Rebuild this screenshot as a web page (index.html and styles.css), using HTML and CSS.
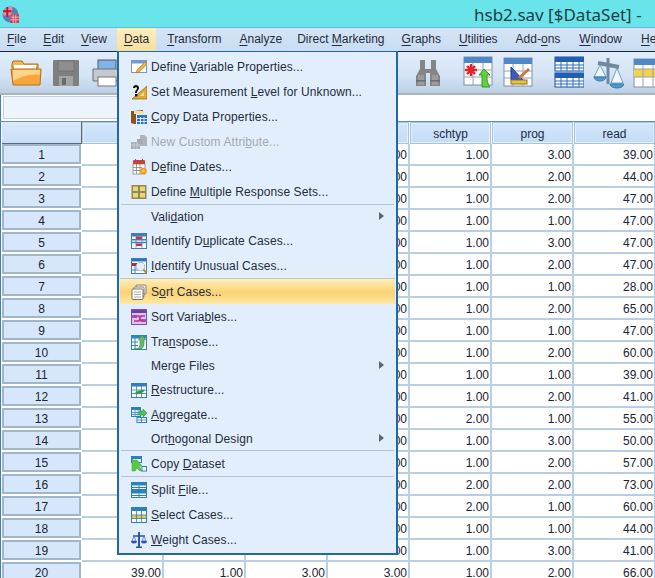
FILE: index.html
```html
<!DOCTYPE html>
<html lang="en">
<head>
<meta charset="utf-8">
<title>hsb2.sav [$DataSet]</title>
<link rel="stylesheet" href="styles.css">
</head>
<body>
<div class="window">
  <header class="titlebar">
    <svg class="app-icon" viewBox="0 0 16 16" width="17" height="17"><circle cx="8" cy="8" r="7.5" fill="#5b7fb5"/><path d="M1 6a7 7 0 0 1 9-5l-1 8H1z" fill="#d98fa8"/><rect x="8" y="8" width="8" height="8" fill="#d8344a"/><path d="M8 10.500h8M8 13h8M10.500 8v8M13 8v8" stroke="#f3c5cc" stroke-width=".8"/><path d="M5 1v9M1 5h8" stroke="#c8102e" stroke-width="1.800"/></svg>
    <span class="doc-title">hsb2.sav [$DataSet] -</span>
  </header>
  <nav class="menubar">
    <span class="mi"><u>F</u>ile</span>
    <span class="mi"><u>E</u>dit</span>
    <span class="mi"><u>V</u>iew</span>
    <span class="mi mi-open"><u>D</u>ata</span>
    <span class="mi mi-transform"><u>T</u>ransform</span>
    <span class="mi mi-analyze"><u>A</u>nalyze</span>
    <span class="mi mi-direct">Direct <u>M</u>arketing</span>
    <span class="mi"><u>G</u>raphs</span>
    <span class="mi mi-utilities"><u>U</u>tilities</span>
    <span class="mi mi-addons">Add-<u>o</u>ns</span>
    <span class="mi mi-window"><u>W</u>indow</span>
    <span class="mi mi-help"><u>H</u>elp</span>
  </nav>
  <div class="toolbar">
    <span class="grip"></span>
    <svg class="t-open" viewBox="0 0 32 28" width="32" height="28"><path d="M2 5l1-3h9l2 3h14v4H2z" fill="#f2b84a" stroke="#a8701c"/><rect x="4" y="6" width="22" height="5" fill="#fff"/><path d="M1 10h30l-1 16H3z" fill="#f8a63a" stroke="#b56f17"/><path d="M3 11h27l-.5 5C22 14 10 18 3 22z" fill="#fcd48a"/></svg>
    <svg class="t-save" viewBox="0 0 26 26" width="26" height="26"><rect width="26" height="26" rx="1" fill="#7f7f7f"/><rect x="5" y="1" width="16" height="10" fill="#8e8e8e" stroke="#737373"/><rect x="6" y="16" width="14" height="10" fill="#a3a3a3"/><rect x="9" y="18" width="4" height="7" fill="#6a6a6a"/></svg>
    <svg class="t-print" viewBox="0 0 30 28" width="30" height="28"><rect x="6" y="1" width="18" height="10" fill="#7fb4e8" stroke="#557"/><path d="M1 10h28v12H1z" fill="#c6c9cd" stroke="#6b6f75"/><rect x="6" y="18" width="18" height="9" fill="#fff" stroke="#777"/></svg>
    <svg class="t-bino" viewBox="0 0 24 27" width="24" height="27"><path d="M4 1h5v9h6V1h5v9l4 7v10H14V14h-4v13H0V17l4-7z" fill="#858585"/><path d="M2 16h6v10H2zM16 16h6v10h-6z" fill="#9c9c9c"/><rect x="0" y="21" width="10" height="1.500" fill="#6d6d6d"/><rect x="14" y="21" width="10" height="1.500" fill="#6d6d6d"/></svg>
    <svg class="t-case" viewBox="0 0 30 32" width="30" height="32"><rect x="1" y="1" width="28" height="28" fill="#fff" stroke="#8290a0"/><rect x="1" y="1" width="28" height="6" fill="#4f88c8"/><path d="M1 14h28M1 21h28M10 7v22M20 7v22" stroke="#9aa4ae"/><path d="M8 8v12M2 14h12M4 10l8 8M12 10l-8 8" stroke="#e8202a" stroke-width="2.400"/><path d="M19 31V19h-3l5-6 6 6h-3c0 5 0 8 3 12z" fill="#5fd13f" stroke="#2f9a2a"/></svg>
    <svg class="t-chart" viewBox="0 0 30 30" width="30" height="30"><rect x="1" y="1" width="28" height="28" fill="#fff" stroke="#8290a0"/><rect x="1" y="1" width="28" height="6" fill="#4f88c8"/><path d="M1 14h28M1 21h28M10 7v22M20 7v22" stroke="#9aa4ae"/><path d="M8 10v13h12z" fill="#3a5cc0" stroke="#1f3a90"/><rect x="8" y="23" width="16" height="4" fill="#e6c240" stroke="#92761a"/><path d="M15 20l10-9 2 2-10 9z" fill="#c9773a"/></svg>
    <svg class="t-tables" viewBox="0 0 30 32" width="30" height="32"><rect x="1" y="1" width="29" height="14" fill="#fff" stroke="#1d4f9c"/><rect x="1" y="1" width="29" height="5" fill="#1f5fb5"/><path d="M1 9h29M1 12h29M7 6v9M13 6v9M19 6v9M25 6v9" stroke="#2a6cc0"/><rect x="1" y="17" width="29" height="14" fill="#fff" stroke="#1d4f9c"/><rect x="1" y="17" width="29" height="5" fill="#1f5fb5"/><path d="M1 25h29M1 28h29M7 22v9M13 22v9M19 22v9M25 22v9" stroke="#2a6cc0"/></svg>
    <svg class="t-scale" viewBox="0 0 31 32" width="31" height="32"><path d="M15 1v26" stroke="#6e8aa0" stroke-width="3"/><path d="M5 6l21 4" stroke="#6e8aa0" stroke-width="4"/><path d="M7 8L1 20h12zM24 11l-6 15h12z" fill="#eef6fb" stroke="#6fa0c4"/><path d="M1 20a6 4 0 0 0 12 0zM17 27a7 4 0 0 0 14 0z" fill="#4f9ad0" stroke="#3a78a8"/></svg>
    <svg class="t-yellow" viewBox="0 0 30 30" width="30" height="30"><rect x="1" y="1" width="28" height="28" fill="#fff" stroke="#8290a0"/><rect x="1" y="1" width="28" height="6" fill="#4f88c8"/><rect x="1" y="11" width="28" height="8" fill="#f2d24a"/><path d="M1 11h28M1 19h28M10 7v22M20 7v22" stroke="#9aa4ae"/></svg>
  </div>
  <div class="cellbar">
    <div class="namebox"></div>
    <div class="valuebox"></div>
  </div>
  <div class="grid">
    <div class="corner"></div>
    <div class="ch"></div><div class="ch"></div><div class="ch"></div><div class="ch"></div>
    <div class="ch">schtyp</div><div class="ch">prog</div><div class="ch">read</div>

    <div class="rh">1</div><div class="c"></div><div class="c"></div><div class="c"></div><div class="c">1.00</div><div class="c">1.00</div><div class="c">3.00</div><div class="c">39.00</div>
    <div class="rh">2</div><div class="c"></div><div class="c"></div><div class="c"></div><div class="c">1.00</div><div class="c">1.00</div><div class="c">2.00</div><div class="c">44.00</div>
    <div class="rh">3</div><div class="c"></div><div class="c"></div><div class="c"></div><div class="c">1.00</div><div class="c">1.00</div><div class="c">2.00</div><div class="c">47.00</div>
    <div class="rh">4</div><div class="c"></div><div class="c"></div><div class="c"></div><div class="c">1.00</div><div class="c">1.00</div><div class="c">1.00</div><div class="c">47.00</div>
    <div class="rh">5</div><div class="c"></div><div class="c"></div><div class="c"></div><div class="c">1.00</div><div class="c">1.00</div><div class="c">3.00</div><div class="c">47.00</div>
    <div class="rh">6</div><div class="c"></div><div class="c"></div><div class="c"></div><div class="c">1.00</div><div class="c">1.00</div><div class="c">2.00</div><div class="c">47.00</div>
    <div class="rh">7</div><div class="c"></div><div class="c"></div><div class="c"></div><div class="c">1.00</div><div class="c">1.00</div><div class="c">1.00</div><div class="c">28.00</div>
    <div class="rh">8</div><div class="c"></div><div class="c"></div><div class="c"></div><div class="c">1.00</div><div class="c">1.00</div><div class="c">2.00</div><div class="c">65.00</div>
    <div class="rh">9</div><div class="c"></div><div class="c"></div><div class="c"></div><div class="c">1.00</div><div class="c">1.00</div><div class="c">1.00</div><div class="c">47.00</div>
    <div class="rh">10</div><div class="c"></div><div class="c"></div><div class="c"></div><div class="c">1.00</div><div class="c">1.00</div><div class="c">2.00</div><div class="c">60.00</div>
    <div class="rh">11</div><div class="c"></div><div class="c"></div><div class="c"></div><div class="c">1.00</div><div class="c">1.00</div><div class="c">1.00</div><div class="c">39.00</div>
    <div class="rh">12</div><div class="c"></div><div class="c"></div><div class="c"></div><div class="c">1.00</div><div class="c">1.00</div><div class="c">2.00</div><div class="c">41.00</div>
    <div class="rh">13</div><div class="c"></div><div class="c"></div><div class="c"></div><div class="c">1.00</div><div class="c">2.00</div><div class="c">1.00</div><div class="c">55.00</div>
    <div class="rh">14</div><div class="c"></div><div class="c"></div><div class="c"></div><div class="c">1.00</div><div class="c">1.00</div><div class="c">3.00</div><div class="c">50.00</div>
    <div class="rh">15</div><div class="c"></div><div class="c"></div><div class="c"></div><div class="c">1.00</div><div class="c">1.00</div><div class="c">2.00</div><div class="c">57.00</div>
    <div class="rh">16</div><div class="c"></div><div class="c"></div><div class="c"></div><div class="c">1.00</div><div class="c">2.00</div><div class="c">2.00</div><div class="c">73.00</div>
    <div class="rh">17</div><div class="c"></div><div class="c"></div><div class="c"></div><div class="c">1.00</div><div class="c">2.00</div><div class="c">1.00</div><div class="c">60.00</div>
    <div class="rh">18</div><div class="c"></div><div class="c"></div><div class="c"></div><div class="c">1.00</div><div class="c">1.00</div><div class="c">1.00</div><div class="c">44.00</div>
    <div class="rh">19</div><div class="c"></div><div class="c"></div><div class="c"></div><div class="c">1.00</div><div class="c">1.00</div><div class="c">3.00</div><div class="c">41.00</div>
    <div class="rh">20</div><div class="c">39.00</div><div class="c">1.00</div><div class="c">3.00</div><div class="c">3.00</div><div class="c">1.00</div><div class="c">2.00</div><div class="c">66.00</div>
  </div>

  <div class="menu">
    <div class="item"><svg viewBox="0 0 16 16"><rect x=".5" y="1.500" width="15" height="12" fill="#fff" stroke="#7f98b8"/><rect x="1" y="2" width="14" height="2.500" fill="#6f9bd8"/><path d="M5 14l1-3 8-8 2 2-8 8z" fill="#f0b040" stroke="#a87a20" stroke-width=".6"/></svg><span>Define <u>V</u>ariable Properties...</span></div>
    <div class="item"><svg viewBox="0 0 16 16"><path d="M16 2v13H1z" fill="#e6a82e" stroke="#8a6510" stroke-width=".7"/><path d="M13 8v4H9z" fill="#f8e6a0"/><path d="M2 4c0-4 6-4 6 0 0 2-2 2-2 5H4c0-3 2-3 2-5 0-1-2-1-2 0z" fill="#111"/><rect x="4" y="10" width="2.400" height="2.400" fill="#111"/></svg><span>Set Measurement <u>L</u>evel for Unknown...</span></div>
    <div class="item"><svg viewBox="0 0 16 16"><path d="M0 2h3l9-1v3H5v11H3l-3-1z" fill="#8a5320"/><rect x="3" y="2" width="10" height="3" fill="#f0dfa8"/><rect x="6" y="6" width="10" height="9" fill="#2a70c8"/><path d="M6 9.500h10M6 12.500h10M9.500 8v7M13 8v7" stroke="#fff" stroke-width=".8"/></svg><span><u>C</u>opy Data Properties...</span></div>
    <div class="item disabled"><svg viewBox="0 0 16 16"><path d="M9 1l4 0 3 2v9H9z" fill="#b0b4b9"/><rect x="6" y="5" width="5" height="5" fill="#a4a8ad"/><rect x="0" y="8" width="9" height="7" fill="#a8acb1"/><path d="M0 11h9M3 8v7M6 8v7" stroke="#d6dde6" stroke-width=".7"/></svg><span>New Custom Attri<u>b</u>ute...</span></div>
    <div class="item"><svg viewBox="0 0 16 16"><rect x="2" y="1" width="12" height="4.500" rx="1" fill="#d63a30"/><path d="M4.500 0v3M11.500 0v3" stroke="#666"/><rect x="2" y="5" width="12" height="10" fill="#fff" stroke="#777" stroke-width=".7"/><path d="M2 8.500h9M2 11.500h9M5.500 5v10M9 5v10" stroke="#777" stroke-width=".7"/><circle cx="12.500" cy="12" r="3.300" fill="#f59a1a"/><circle cx="12.500" cy="12" r="1.300" fill="#ffd35a"/></svg><span>D<u>e</u>fine Dates...</span></div>
    <div class="item"><svg viewBox="0 0 16 16"><rect x=".5" y="1" width="15" height="14" fill="#8b8760"/><rect x="2" y="2.500" width="5" height="4.500" fill="#f2d668"/><rect x="9" y="2.500" width="5" height="4.500" fill="#f2d668"/><rect x="2" y="9" width="5" height="4.500" fill="#f2d668"/><rect x="9" y="9" width="5" height="4.500" fill="#f2d668"/></svg><span>Define <u>M</u>ultiple Response Sets...</span></div>
    <div class="sep"></div>
    <div class="item plain"><i></i><span>Vali<u>d</u>ation</span><b class="arrow"></b></div>
    <div class="item"><svg viewBox="0 0 16 16"><rect x=".5" y=".5" width="15" height="15" fill="#fff" stroke="#3f7fb8"/><rect x="1" y="1" width="14" height="2.500" fill="#3f7fb8"/><rect x="1" y="6" width="14" height="1.500" fill="#3f7fb8"/><rect x="5" y="3.500" width="6" height="2.500" fill="#d82b3a"/><rect x="5" y="10.500" width="6" height="2.500" fill="#d82b3a"/><path d="M1 9.500h14" stroke="#3f7fb8" stroke-width="1.500"/><path d="M5 3v12M11 3v12" stroke="#3f7fb8" stroke-width=".7"/></svg><span>Identify D<u>u</u>plicate Cases...</span></div>
    <div class="item"><svg viewBox="0 0 16 16"><rect x=".5" y=".5" width="15" height="15" fill="#fff" stroke="#3f7fb8"/><rect x="1" y="1" width="14" height="2.500" fill="#2f74c0"/><rect x="1" y="5" width="5" height="3" fill="#c8202e"/><path d="M1 12h6M4 8v7" stroke="#3f7fb8"/><circle cx="9.500" cy="8.500" r="4.300" fill="#e6f0fa" stroke="#a8b8c8"/><path d="M12.500 11.500l3 3.500" stroke="#b88a20" stroke-width="2"/></svg><span><u>I</u>dentify Unusual Cases...</span></div>
    <div class="item hot"><svg viewBox="0 0 16 16"><rect x="5" y="1" width="10" height="9" rx="1" fill="#f2efe6" stroke="#6b6b6b" stroke-width=".8"/><rect x="3" y="3" width="10" height="10" rx="1" fill="#f7f5ee" stroke="#6b6b6b" stroke-width=".8"/><rect x="1" y="5" width="11" height="10.500" rx="1" fill="#fffef8" stroke="#555" stroke-width=".8"/><path d="M3 8h7M3 10.500h7M3 13h7" stroke="#999" stroke-width=".8"/></svg><span>S<u>o</u>rt Cases...</span></div>
    <div class="item"><svg viewBox="0 0 16 16"><rect x=".5" y=".5" width="15" height="15" fill="#d6c6ec" stroke="#7a52b0"/><rect x="1" y="1" width="14" height="3" fill="#6e3fa8"/><rect x="1" y="6" width="5" height="3" fill="#8e62c2"/><rect x="10" y="10" width="5" height="3" fill="#8e62c2"/><path d="M3 7h5l2 5h4M3 12h5l2-5h4" fill="none" stroke="#c4308a" stroke-width="1.500"/></svg><span>Sort Varia<u>b</u>les...</span></div>
    <div class="item"><svg viewBox="0 0 16 16"><rect x=".5" y="1.500" width="15" height="14" fill="#fff" stroke="#2f86b0"/><rect x="1" y="2" width="14" height="2.500" fill="#2f86b0"/><path d="M1 8h6M1 11.500h6M4 4v11" stroke="#2f86b0"/><path d="M3 15c6 0 6-3 6-6V6H7.500L11 1l3.500 5H13v4c0 3-2 5-5 5z" fill="#6cb86a" stroke="#3a8a40" stroke-width=".6"/></svg><span>Tra<u>n</u>spose...</span></div>
    <div class="item plain"><i></i><span>Mer<u>g</u>e Files</span><b class="arrow"></b></div>
    <div class="item"><svg viewBox="0 0 16 16"><rect x=".5" y="1.500" width="15" height="14" fill="#fff" stroke="#2a80c0"/><rect x="1" y="2" width="14" height="2.500" fill="#2a80c0"/><path d="M1 8h14M1 11.500h14M5.500 4v11M10.500 4v11" stroke="#2a80c0" stroke-width=".8"/><path d="M3 12c3-4 7-4 11-4-2 3-6 5-8 4z" fill="#3a9a3a"/></svg><span><u>R</u>estructure...</span></div>
    <div class="item"><svg viewBox="0 0 16 16"><rect x=".5" y=".5" width="9" height="9" fill="#e8f2fb" stroke="#2a80c0"/><rect x="1" y="1" width="8" height="2" fill="#2a80c0"/><path d="M1 5.500h8M1 7.500h8M4 3v6M7 3v6" stroke="#2a80c0" stroke-width=".7"/><rect x="6" y="10.500" width="9.500" height="5" fill="#fff" stroke="#2a80c0"/><path d="M6 13h10M10.500 10v6" stroke="#2a80c0" stroke-width=".8"/><path d="M8 4h4V2l4 4-4 4V8H8z" fill="#4cc44a" stroke="#2a9030" stroke-width=".5"/></svg><span><u>A</u>ggregate...</span></div>
    <div class="item plain"><i></i><span>Ort<u>h</u>ogonal Design</span><b class="arrow"></b></div>
    <div class="sep"></div>
    <div class="item"><svg viewBox="0 0 16 16"><rect x=".5" y=".5" width="10" height="6" fill="#e8f2fb" stroke="#2a80c0"/><rect x="1" y="1" width="9" height="2" fill="#2a80c0"/><path d="M1 3v12h3l2-3 3 3h2l-3-5h3l-5-6H2z" fill="#59c93f" stroke="#3a9a30" stroke-width=".5"/><rect x="11" y="10.500" width="4.500" height="4.500" fill="#fff" stroke="#2a80c0"/></svg><span>Copy <u>D</u>ataset</span></div>
    <div class="sep"></div>
    <div class="item"><svg viewBox="0 0 16 16"><rect x=".5" y=".5" width="15" height="7" fill="#fff" stroke="#2a80c0"/><rect x="1" y="1" width="14" height="2.500" fill="#2a80c0"/><path d="M1 5.500h14M8 3.500v4" stroke="#2a80c0"/><rect x=".5" y="8.500" width="15" height="7" fill="#fff" stroke="#2a80c0"/><rect x="1" y="9" width="14" height="2.500" fill="#2a80c0"/><path d="M1 13.500h14M8 11.500v4" stroke="#2a80c0"/></svg><span>Split <u>F</u>ile...</span></div>
    <div class="item"><svg viewBox="0 0 16 16"><rect x=".5" y=".5" width="15" height="15" fill="#fff" stroke="#2a80c0"/><rect x="1" y="1" width="14" height="3" fill="#2a80c0"/><rect x="1" y="8" width="14" height="3.500" fill="#eec73a"/><path d="M1 8h14M1 11.500h14M5.500 4v11M10.500 4v11" stroke="#2a80c0" stroke-width=".8"/></svg><span><u>S</u>elect Cases...</span></div>
    <div class="item"><svg viewBox="0 0 16 16"><path d="M8 0v15M5 15.500h6" stroke="#2a55b0" stroke-width="2"/><path d="M2 4h12" stroke="#2a55b0" stroke-width="1.500"/><path d="M3 4L1 9h4zM13 4l-2 5h4z" fill="#dfeafa" stroke="#2a55b0" stroke-width=".6"/><path d="M0 9a3 2.500 0 0 0 6 0zM10 9a3 2.500 0 0 0 6 0z" fill="#2a55b0"/></svg><span><u>W</u>eight Cases...</span></div>
  </div>
</div>
</body>
</html>
```

FILE: styles.css
```css
* { box-sizing: border-box; }
html, body { margin: 0; padding: 0; height: 100%; overflow: hidden; background: #fff; }
.window {
  position: relative;
  width: 655px;
  height: 578px;
  overflow: hidden;
  font-family: "Liberation Sans", Arial, sans-serif;
  font-size: 12px;
  color: #1b2433;
}
u { text-underline-offset: 1px; }

.titlebar {
  height: 28px;
  background: #69e4ea;
  border-bottom: 1px solid #62bcd0;
  display: flex;
  align-items: center;
  padding: 2px 0 0 2px;
}
.app-icon { flex: none; }
.doc-title {
  margin-left: 455px;
  font-family: "Noto Sans", "Open Sans", sans-serif;
  font-size: 17px;
  color: #1c3f44;
  white-space: nowrap;
}

.menubar {
  height: 24px;
  background: linear-gradient(#d6e4f5, #c9dcf3);
  border-bottom: 1px solid #1b2a3a;
  display: flex;
  align-items: stretch;
  padding-left: 7px;
  gap: 17px;
  white-space: nowrap;
  color: #1f2c3d;
}
.mi { display: block; line-height: 23px; }
.mi u { text-underline-offset: 2px; }
.mi-open {
  background: linear-gradient(#fdeebd, #f9df9f);
  margin: 0 -7px 0 -7px;
  padding: 0 7px;
}
.mi-transform { margin-left: 1px; }
.mi-analyze { margin-left: 1px; }
.mi-direct { margin-left: -2px; }
.mi-utilities { margin-left: 1px; }
.mi-addons { margin-left: 1px; }
.mi-window { margin-left: 2px; }
.mi-help { margin-left: 2px; }

.toolbar {
  height: 43px;
  background: linear-gradient(#e2edf9, #d3e3f5 60%, #bccfe3);
  border-bottom: 2px solid #a8b4c0;
  display: flex;
  align-items: center;
  padding-left: 3px;
}
.toolbar svg { flex: none; }
.grip {
  width: 3px;
  height: 36px;
  margin-right: 7px;
  background: repeating-linear-gradient(#9fb0c2 0 2px, transparent 2px 4px);
}
.t-save { margin-left: 11px; }
.t-print { margin-left: 13px; }
.t-bino { margin-left: 294px; }
.t-case { margin: -2px 0 0 23px; }
.t-chart { margin: -2px 0 0 10px; }
.t-tables { margin: -2px 0 0 21px; }
.t-scale { margin-left: 9px; }
.t-yellow { margin-left: 9px; }

.cellbar {
  height: 27px;
  display: flex;
  padding: 1px 0 2px 2px;
  border-bottom: 1px solid #5f92bb;
  border-left: 1px solid #3f7fae;
  background: #fff;
}
.namebox { width: 115px; background: #eef4fb; border: 1px solid #c4cfdb; }
.valuebox { flex: 1; background: #fff; }

.grid {
  display: grid;
  grid-template-columns: 80px repeat(7, 82px);
  grid-auto-rows: 22px;
  padding-left: 1px;
  border-left: 1px solid #3f7fae;
  white-space: nowrap;
}
.corner {
  background: linear-gradient(#dbe9fa, #c8def7);
  border-right: 1px solid #5c6b7c;
  border-bottom: 1px solid #5c6b7c;
}
.ch {
  background: linear-gradient(#d3e6fb, #c3dcf7);
  border: 1px solid #a9c3de;
  box-shadow: inset 0 0 0 1px #e6f0fb;
  margin: 0 1px 0 0;
  display: flex;
  align-items: center;
  justify-content: center;
  color: #1f2c3d;
  padding-top: 1px;
}
.rh {
  background: #d6e7fb;
  border: 2px solid #a2b6ca;
  margin: 0 1px 2px 0;
  display: flex;
  align-items: center;
  justify-content: center;
  color: #1a2433;
  height: 20px;
  padding-top: 2px;
}
.c {
  background: #fff;
  border-right: 2px solid #b8cee4;
  border-bottom: 2px solid #b8cee4;
  display: flex;
  align-items: center;
  justify-content: flex-end;
  padding: 2px 1px 0 0;
  color: #1a2433;
}

.menu {
  position: absolute;
  left: 117px;
  top: 51px;
  width: 281px;
  height: 504px;
  background: #e3eefc;
  border: 1px solid #25689e;
  border-width: 1px 2px 2px 2px;
  padding: 2px 1px 0;
  color: #1f2c3d;
  letter-spacing: .1px;
}
.item {
  height: 25px;
  display: flex;
  align-items: center;
  padding-left: 11px;
  gap: 4px;
  white-space: nowrap;
  position: relative;
}
.item svg, .item i { flex: none; width: 16px; height: 16px; display: block; }
.item.plain { height: 23px; }
.item.disabled { color: #a3a9b1; }
.item.hot {
  height: 26px;
  background: linear-gradient(#fdeebc, #fbd271 55%, #fde9a8);
  border-top: 1px solid #c2c6c2;
}
.sep { height: 1px; background: #b5c5d6; margin: 0 1px; }
.arrow {
  position: absolute;
  right: 11px;
  top: 7px;
  border-left: 5px solid #5c6570;
  border-top: 4.500px solid transparent;
  border-bottom: 4.500px solid transparent;
}
```
